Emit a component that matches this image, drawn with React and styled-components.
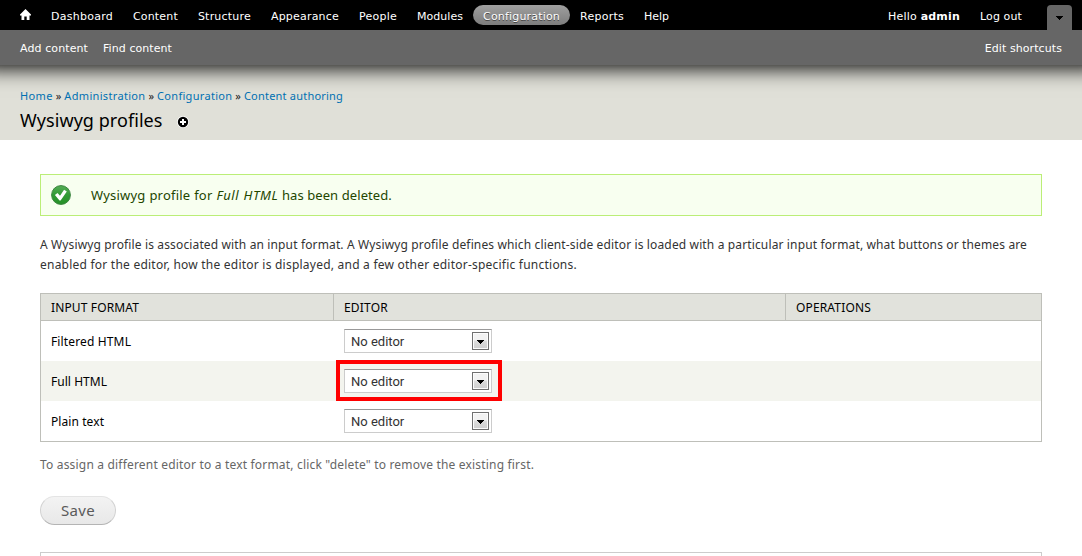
import React from 'react';
import styled, { createGlobalStyle, css } from 'styled-components';

const GlobalStyle = createGlobalStyle`
  * { box-sizing: border-box; }
  html, body { margin: 0; background: #fff; overflow: hidden; }
  body { font: 12px/20px "Noto Sans", sans-serif; color: #000; }
`;

const tracked = css`letter-spacing: ${(p) => p.$track || 0}px;`;

const Page = styled.div`
  height: 556px;
  overflow: hidden;
`;

const Toolbar = styled.header`
  position: relative;
  z-index: 1;
  margin: 0 -20px;
  font: 11px/20px "DejaVu Sans", sans-serif;
  color: #fff;
  box-shadow: 0 3px 20px #000;
`;

const MenuBar = styled.div`
  display: flex;
  align-items: flex-start;
  height: 30px;
  padding: 5px 30px 0;
  background: #000;
`;

const Nav = styled.nav`
  display: flex;
  flex: 1;
`;

const MenuLink = styled.a`
  height: 20px;
  padding: 1px 10px 0;
  border-radius: 10px;
  line-height: 21px;
  white-space: nowrap;
  ${tracked}
  ${(p) => p.$active && css`
    background: linear-gradient(#9f9f9f, #7d7d7d);
    text-shadow: 0 1px 0 #444;
  `}
`;

const HomeIcon = styled.svg`
  display: block;
  width: 11px;
  height: 11px;
  margin-top: 3px;
`;

const DrawerToggle = styled.button`
  display: flex;
  align-items: center;
  justify-content: center;
  width: 25px;
  height: 25px;
  margin-left: 15px;
  padding: 1px 0 0;
  border: 0;
  border-radius: 4px 4px 0 0;
  background: #666;
`;

const ShortcutBar = styled.div`
  display: flex;
  gap: 15px;
  height: 35px;
  padding: 9px 40px 0;
  background: #666;
`;

const Shortcut = styled.a`
  white-space: nowrap;
  ${tracked}
  ${(p) => p.$end && 'margin-left: auto;'}
`;

const Branding = styled.div`
  height: 75px;
  padding: 21px 20px 0;
  background: #e0e0d8;
`;

const Breadcrumb = styled.div`
  display: flex;
  gap: 3px;
  font-size: 11px;
  line-height: 20px;
  color: #222;
`;

const Crumb = styled.a`
  color: #0071b3;
  white-space: nowrap;
  ${tracked}
`;

const TitleRow = styled.div`
  display: flex;
  align-items: center;
  gap: 14px;
  height: 28px;

  svg { margin-top: 3px; }
`;

const Title = styled.h1`
  margin: 0;
  font-size: 18px;
  font-weight: 400;
  line-height: 28px;
  letter-spacing: 0.06px;
`;

const Content = styled.main`
  padding: 34px 40px 0;
`;

const Status = styled.div`
  display: flex;
  align-items: center;
  gap: 20px;
  height: 42px;
  padding-left: 10px;
  border: 1px solid #be7;
  background: #f8fff0;
  color: #234600;
  font-size: 13px;
`;

const StatusText = styled.span`
  letter-spacing: 0.2px;
  word-spacing: 0.3px;
  white-space: pre;

  em { letter-spacing: 0.6px; }
`;

const StatusTail = styled.span`
  letter-spacing: 0.09px;
  word-spacing: 0;
`;

const Description = styled.p`
  margin: 19px 0 18px;
  color: #333;
`;

const Line = styled.span`
  display: block;
  white-space: nowrap;
  ${tracked}
`;

const Table = styled.div`
  border: 1px solid #bebfb9;
`;

const Row = styled.div`
  display: grid;
  grid-template-columns: 292px 452px 1fr;
  height: 40px;
  background: ${(p) => (p.$even ? '#f3f4ee' : '#fff')};
`;

const HeadRow = styled(Row)`
  height: 27px;
  background: #e1e2dc;
  border-bottom: 1px solid #bebfb9;
`;

const Cell = styled.div`
  display: flex;
  align-items: center;
  padding: 1px 10px 0;
  ${tracked}
`;

const HeadCell = styled(Cell)`
  text-transform: uppercase;
  & + & { border-left: 1px solid #bebfb9; }
`;

const EditorCell = styled(Cell)`
  padding: 0 0 0 11px;
`;

const SelectWrap = styled.div`
  position: relative;
`;

const Select = styled.div`
  display: flex;
  align-items: center;
  justify-content: space-between;
  width: 148px;
  height: 24px;
  padding: 0 2px 0 6px;
  border: 1px solid #ccc;
  border-top-color: #999;
  background: #fff;
  color: #333;
  font: 13px/21px Roboto, sans-serif;
`;

const SelectArrow = styled.span`
  display: flex;
  align-items: center;
  justify-content: center;
  width: 17px;
  height: 18px;
  padding-top: 1px;
  border: 1px solid #707070;
  background: linear-gradient(#f2f2f2 0 45%, #ddd 50%, #cfcfcf);
  box-shadow: inset 0 0 0 1px #fcfcfc;
`;

const Highlight = styled.div`
  position: absolute;
  inset: -9px -10px -8px -8px;
  border: 4px solid #f00;
`;

const Help = styled.p`
  margin: 13px 0 21px;
  color: #666;
  letter-spacing: 0.185px;
`;

const SaveButton = styled.button`
  display: block;
  width: 76px;
  height: 29px;
  padding: 0 0 1px;
  border: 1px solid #e4e4e4;
  border-color: #e4e4e4 #d2d2d2 #b4b4b4;
  border-radius: 15px;
  background: linear-gradient(#f3f3f3, #e8e8e8);
  color: #5a5a5a;
  font: 15px/24px "Noto Sans", sans-serif;
  letter-spacing: 0.3px;
`;

const NextPanel = styled.div`
  height: 40px;
  margin-top: 27px;
  border: 1px solid #ccc;
`;

const menu = [
  ['Dashboard', 0.252], ['Content', 0.174], ['Structure', 0.206], ['Appearance', 0.2],
  ['People', 0.247], ['Modules', 0.034], ['Configuration', 0.186], ['Reports', 0.251], ['Help', 0],
];

const crumbs = [
  ['Home', 0.35], ['Administration', 0.33], ['Configuration', 0.3], ['Content authoring', 0.21],
];

const formats = [['Filtered HTML', 0.14], ['Full HTML', 0.04], ['Plain text', 0.08]];

const DownArrow = ({ width = 7, height = 4 }) => (
  <svg width={width} height={height} viewBox="0 0 7 4" shapeRendering="crispEdges">
    <path d="M0 0h7v1h-1v1h-1v1h-1v1h-1v-1h-1v-1h-1v-1h-1z" fill="#000" />
  </svg>
);

const CheckIcon = () => (
  <svg width="20" height="20" viewBox="0 0 20 20">
    <defs>
      <linearGradient id="ok" x1="0" y1="0" x2="0" y2="1">
        <stop offset="0" stopColor="#55ad55" />
        <stop offset="0.5" stopColor="#329a36" />
        <stop offset="1" stopColor="#259027" />
      </linearGradient>
    </defs>
    <circle cx="10" cy="10" r="9.4" fill="url(#ok)" stroke="#3c8540" />
    <path d="M3.9 10.1 6.5 7.9 9 10.8 13.1 4.8 15.8 6.5 9.6 15.4 8.5 15.4z" fill="#fff" />
  </svg>
);

const AddIcon = () => (
  <svg width="12" height="12" viewBox="0 0 12 12">
    <circle cx="6" cy="6" r="6" fill="#fff" />
    <circle cx="6" cy="6" r="5.2" fill="#000" />
    <path d="M5 3h2v2h2v2H7v2H5V7H3V5h2z" fill="#fff" />
  </svg>
);

export default function App() {
  return (
    <Page>
      <GlobalStyle />
      <Toolbar>
        <MenuBar>
          <Nav>
            <MenuLink>
              <HomeIcon viewBox="0 0 11 11">
                <path d="M5.5 0 11 5.5V6.5H9.5V11H6.7V7.5H4.3V11H1.5V6.5H0V5.5z" fill="#fff" />
              </HomeIcon>
            </MenuLink>
            {menu.map(([label, track]) => (
              <MenuLink key={label} $track={track} $active={label === 'Configuration'}>{label}</MenuLink>
            ))}
          </Nav>
          <MenuLink $track={0.2}>Hello <b>admin</b></MenuLink>
          <MenuLink $track={0.12}>Log out</MenuLink>
          <DrawerToggle aria-label="Toggle shortcuts"><DownArrow /></DrawerToggle>
        </MenuBar>
        <ShortcutBar>
          <Shortcut $track={0.1}>Add content</Shortcut>
          <Shortcut $track={0.07}>Find content</Shortcut>
          <Shortcut $track={0.08} $end>Edit shortcuts</Shortcut>
        </ShortcutBar>
      </Toolbar>
      <Branding>
        <Breadcrumb>
          {crumbs.map(([label, track], i) => (
            <React.Fragment key={label}>
              {i > 0 && <span>»</span>}
              <Crumb $track={track}>{label}</Crumb>
            </React.Fragment>
          ))}
        </Breadcrumb>
        <TitleRow>
          <Title>Wysiwyg profiles</Title>
          <AddIcon />
        </TitleRow>
      </Branding>
      <Content>
        <Status>
          <CheckIcon />
          <StatusText>
            Wysiwyg profile for <em>Full HTML</em>
            <StatusTail> has been deleted.</StatusTail>
          </StatusText>
        </Status>
        <Description>
          <Line $track={0.137}>A Wysiwyg profile is associated with an input format. A Wysiwyg profile defines which client-side editor is loaded with a particular input format, what buttons or themes are</Line>
          <Line $track={0.227}>enabled for the editor, how the editor is displayed, and a few other editor-specific functions.</Line>
        </Description>
        <Table>
          <HeadRow>
            <HeadCell $track={0.13}>Input format</HeadCell>
            <HeadCell $track={0.2}>Editor</HeadCell>
            <HeadCell $track={0.15}>Operations</HeadCell>
          </HeadRow>
          {formats.map(([label, track], i) => (
            <Row key={label} $even={i === 1}>
              <Cell $track={track}>{label}</Cell>
              <EditorCell>
                <SelectWrap>
                  <Select>
                    No editor
                    <SelectArrow><DownArrow /></SelectArrow>
                  </Select>
                  {i === 1 && <Highlight />}
                </SelectWrap>
              </EditorCell>
              <Cell />
            </Row>
          ))}
        </Table>
        <Help>To assign a different editor to a text format, click "delete" to remove the existing first.</Help>
        <SaveButton>Save</SaveButton>
        <NextPanel />
      </Content>
    </Page>
  );
}
